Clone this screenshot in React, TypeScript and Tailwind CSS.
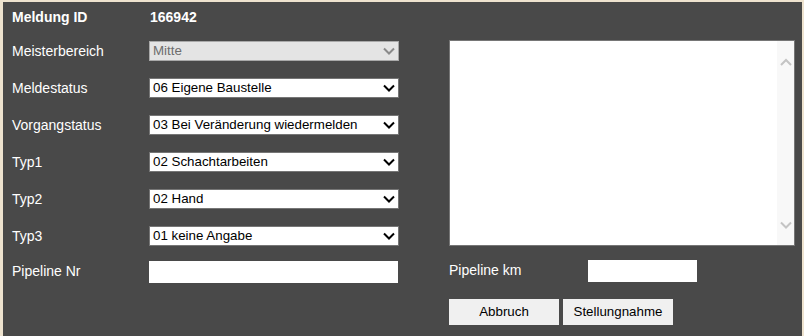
import React from "react";

const font = { fontFamily: '"Liberation Sans", Arial, sans-serif' };

function Chevron({ color = "#000", up = false }: { color?: string; up?: boolean }) {
  return (
    <svg width="12" height="8" viewBox="0 0 12 8" className="block">
      <path
        d={up ? "M1 7 L6 2 L11 7" : "M1 1.5 L6 6.5 L11 1.5"}
        fill="none"
        stroke={color}
        strokeWidth="2"
      />
    </svg>
  );
}

function SelectBox({ value, disabled = false }: { value: string; disabled?: boolean }) {
  return (
    <div
      className={
        disabled
          ? "relative flex h-[20px] w-[250px] items-center border border-[#a9a9a9] bg-[#e4e4e4] pl-[3px] text-[13.33px] text-[#6d6d6d]"
          : "relative flex h-[20px] w-[250px] items-center border border-[#767676] bg-white pl-[3px] text-[13.33px] text-black"
      }
    >
      <span className="leading-none">{value}</span>
      <div className="absolute right-[3px] top-[5px]">
        <Chevron color={disabled ? "#8a8a8a" : "#000"} />
      </div>
    </div>
  );
}

const rows: { label: string; value: string; disabled?: boolean }[] = [
  { label: "Meisterbereich", value: "Mitte", disabled: true },
  { label: "Meldestatus", value: "06 Eigene Baustelle" },
  { label: "Vorgangstatus", value: "03 Bei Veränderung wiedermelden" },
  { label: "Typ1", value: "02 Schachtarbeiten" },
  { label: "Typ2", value: "02 Hand" },
  { label: "Typ3", value: "01 keine Angabe" },
];

export default function App() {
  return (
    <div className="h-[336px] w-[804px] overflow-hidden bg-[#eee3cf]" style={font}>
      <div className="ml-[3px] mt-[2px] h-[334px] w-[799px] bg-[#494949] pt-[7px] text-[14px] text-white">
        <div className="flex h-[16px] items-center pl-[9px] font-bold">
          <span className="w-[138px]">Meldung ID</span>
          <span>166942</span>
        </div>
        <div className="flex pl-[9px] pt-[15px]">
          <div className="flex w-[387px] flex-col pt-[1px]">
            <div className="flex flex-col gap-[17px]">
              {rows.map((r) => (
                <div key={r.label} className="flex h-[20px] items-center">
                  <span className="w-[137px] leading-[20px]">{r.label}</span>
                  <SelectBox value={r.value} disabled={r.disabled} />
                </div>
              ))}
            </div>
            <div className="mt-[15px] flex h-[22px] items-center">
              <span className="w-[137px] -translate-y-[1px] leading-[20px]">Pipeline Nr</span>
              <div className="h-[22px] w-[249px] bg-white" />
            </div>
          </div>
          <div className="ml-[50px] flex flex-col">
            <div className="flex h-[206px] w-[346px] border border-[#767676] bg-white">
              <div className="flex-1" />
              <div className="flex w-[17px] flex-col items-center justify-between bg-[#f8f8f8] pb-[16px] pt-[17px]">
                <Chevron color="#c4c4c4" up />
                <Chevron color="#c4c4c4" />
              </div>
            </div>
            <div className="mt-[14px] flex h-[22px] items-center">
              <span className="w-[139px] -translate-y-[1px] leading-[20px]">Pipeline km</span>
              <div className="h-[22px] w-[109px] bg-white" />
            </div>
            <div className="mt-[17px] flex gap-[4px]">
              <button className="flex h-[26px] w-[110px] items-center justify-center bg-[#f0f0f0] text-[13.33px] text-black">
                Abbruch
              </button>
              <button className="flex h-[26px] w-[110px] items-center justify-center bg-[#f0f0f0] text-[13.33px] text-black">
                Stellungnahme
              </button>
            </div>
          </div>
        </div>
      </div>
    </div>
  );
}
